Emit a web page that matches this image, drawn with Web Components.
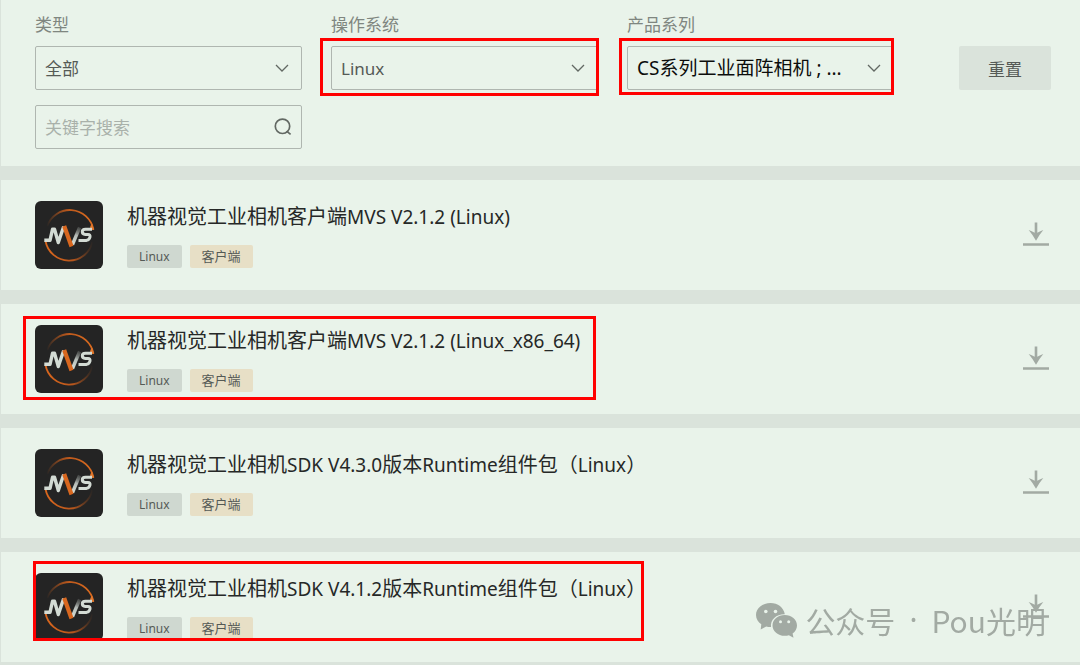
<!DOCTYPE html>
<html lang="zh-CN">
<head>
<meta charset="utf-8">
<meta name="viewport" content="width=device-width, initial-scale=1">
<title>下载中心</title>
<style>
  :root {
    --page: #dae3db;
    --card: #e9f3ea;
    --line: #afb6b0;
    --mark: #ff0000;
  }
  body {
    margin: 0;
    background: var(--page);
    color: #262827;
    font-family: "Noto Sans", "Noto Sans CJK SC", sans-serif;
  }
</style>
</head>
<body>
<download-page></download-page>

<script>
const define = (name, html, setup) => {
  const template = document.createElement('template');
  template.innerHTML = html;
  customElements.define(name, class extends HTMLElement {
    connectedCallback() {
      if (this.shadowRoot) return;
      const root = this.attachShadow({ mode: 'open' });
      root.append(template.content.cloneNode(true));
      if (setup) setup(this, root);
    }
  });
};

/* Drop-down with its label; "strong" gives the larger black value */
define('select-field', `
  <style>
    :host { display: block; position: relative; min-width: 0; }
    label { display: block; font-size: 17px; line-height: 24px; margin-bottom: 9px; color: #7f8680; }
    .box { position: relative; }
    select {
      appearance: none; display: block; box-sizing: border-box; width: 100%; height: 44px;
      padding: 0 40px 0 9px; border: 1px solid var(--line); border-radius: 2px;
      background: transparent; color: #555a56; font: inherit; font-size: 17px;
    }
    :host([strong]) select { color: #0c0d0c; font-size: 19px; }
    svg { position: absolute; right: 13px; top: 15px; pointer-events: none; }
    :host([marked]) .box::after {
      content: ""; position: absolute; inset: -8px -1px -6px -11px;
      border: 3px solid var(--mark); pointer-events: none;
    }
    :host([strong][marked]) .box::after { inset: -8px 0 -5px -8px; }
  </style>
  <label for="field"></label>
  <div class="box">
    <select id="field"><option></option></select>
    <svg width="14" height="14" viewBox="0 0 14 14" fill="none" stroke="#626863" stroke-width="1.3"><path d="M1 4l6 6 6-6"/></svg>
  </div>`, (el, root) => {
  root.querySelector('label').textContent = el.getAttribute('label');
  root.querySelector('option').textContent = el.getAttribute('value');
});

define('search-field', `
  <style>
    :host { display: block; position: relative; min-width: 0; }
    input {
      display: block; box-sizing: border-box; width: 100%; height: 44px; padding: 0 44px 0 9px;
      border: 1px solid var(--line); border-radius: 2px; background: transparent;
      color: #555a56; font: inherit; font-size: 17px;
    }
    input::placeholder { color: #a9b1aa; opacity: 1; }
    button { position: absolute; right: 9px; top: 12px; width: 20px; height: 20px; padding: 0; border: 0; background: none; }
    svg { display: block; }
  </style>
  <input type="search" placeholder="关键字搜索" aria-label="关键字搜索">
  <button type="button" aria-label="搜索">
    <svg width="20" height="20" viewBox="0 0 20 20" fill="none" stroke="#626863" stroke-width="1.7"><circle cx="9.5" cy="9.3" r="7.2"/><path d="M13.6 14.2l4 3.2"/></svg>
  </button>`);

define('filter-bar', `
  <style>
    :host { display: flex; align-items: flex-start; gap: 65px; padding: 13px 29px 17px 34px; background: var(--card); }
    .fields { flex: 1; display: grid; grid-template-columns: repeat(3, minmax(0, 1fr)); gap: 15px 29px; }
    button {
      width: 92px; height: 44px; margin-top: 33px; padding: 0; border: 0; border-radius: 2px;
      background: var(--page); color: #555a56; font: inherit; font-size: 17px;
    }
  </style>
  <div class="fields">
    <select-field label="类型" value="全部"></select-field>
    <select-field label="操作系统" value="Linux" marked></select-field>
    <select-field label="产品系列" value="CS系列工业面阵相机 ; ..." strong marked></select-field>
    <search-field></search-field>
  </div>
  <button type="reset">重置</button>`);

define('mvs-logo', `
  <style>:host { display: block; } svg { display: block; }</style>
  <svg width="68" height="68" viewBox="0 0 68 68" fill="none" role="img" aria-label="MVS">
    <defs>
      <linearGradient id="top" gradientUnits="userSpaceOnUse" x1="12" y1="28" x2="56" y2="22">
        <stop offset="0" stop-color="#c8601e" stop-opacity="0"/><stop offset=".5" stop-color="#b9571c"/><stop offset="1" stop-color="#d96a1f"/>
      </linearGradient>
      <linearGradient id="bottom" gradientUnits="userSpaceOnUse" x1="12" y1="44" x2="58" y2="44">
        <stop offset="0" stop-color="#d9661d"/><stop offset=".55" stop-color="#b9571c"/><stop offset="1" stop-color="#b9571c" stop-opacity="0"/>
      </linearGradient>
      <linearGradient id="fade" gradientUnits="userSpaceOnUse" x1="38" y1="43" x2="45" y2="26">
        <stop offset="0" stop-color="#d3dbd4"/><stop offset=".5" stop-color="#b5bbb6"/><stop offset="1" stop-color="#666a67" stop-opacity=".4"/>
      </linearGradient>
    </defs>
    <rect width="68" height="68" rx="6" fill="#242424"/>
    <path d="M12.2 25A24 24 0 0 1 58.4 28.5" stroke="url(#top)" stroke-width="1.8"/>
    <path d="M54.8 28.8Q54.6 25 57 22.5L59.2 29z" fill="#e0762b"/>
    <path d="M10.5 40A24 24 0 0 0 57.5 41" stroke="url(#bottom)" stroke-width="1.8"/>
    <path d="M9.3 39.3H15L17.5 28.3H19.5L23.3 41.5L28.7 25.5" stroke="#d3dbd4" stroke-width="3.4" stroke-linejoin="round"/>
    <path d="M37.5 43.5L44.6 26.5" stroke="url(#fade)" stroke-width="3.4"/>
    <path d="M29.2 25L36.5 45.5" stroke="#d8671f" stroke-width="4.2"/>
    <path d="M57 28.2H50.5Q47.3 28.2 47.3 30.7T50.3 33.4H53Q55.5 33.4 55 36T51.5 39.4H43.5" stroke="#d3dbd4" stroke-width="3"/>
  </svg>`);

/* Latin runs are set one pixel smaller than the Chinese text round them */
const setMixedText = (target, text) => {
  for (const run of text.trim().match(/[\x20-\x7e]+|[^\x20-\x7e]+/g)) {
    const span = document.createElement('span');
    if (/^[\x20-\x7e]/.test(run)) span.className = 'latin';
    span.textContent = run;
    target.append(span);
  }
};

define('tag-label', `
  <style>
    :host { display: block; padding: 0 12px; border-radius: 2px; background: #cfd8d0; color: #555a56; font-size: 13px; line-height: 22px; }
    :host([kind="client"]) { background: #e7dfc6; }
    .latin { font-size: 12px; }
  </style><div></div>`, (el, root) => setMixedText(root.querySelector('div'), el.getAttribute('text')));

define('download-item', `
  <style>
    :host { display: flex; align-items: flex-start; gap: 24px; padding: 21px 29px 21px 34px; background: var(--card); }
    .main { position: relative; display: flex; gap: 24px; }
    .main::after { content: none; position: absolute; border: 3px solid var(--mark); pointer-events: none; }
    :host([marked]) .main::after { content: ""; inset: -9px -16px -7px -12px; }
    :host([marked="tight"]) .main::after { inset: -12px 2px 0 -2px; }
    h3 { margin: 0 0 12px; font-size: 20px; font-weight: 400; line-height: 32px; }
    .latin { font-size: 19px; }
    .tags { display: flex; gap: 8px; }
    button { align-self: center; margin-left: auto; width: 30px; height: 30px; padding: 0; border: 0; background: none; }
    svg { display: block; }
  </style>
  <div class="main">
    <mvs-logo></mvs-logo>
    <div>
      <h3></h3>
      <div class="tags"><tag-label text="Linux"></tag-label><tag-label kind="client" text="客户端"></tag-label></div>
    </div>
  </div>
  <button type="button" aria-label="下载">
    <svg width="30" height="30" viewBox="0 0 30 30"><path d="M13.7 2.5h2.6v10.2q3-1.3 6-2.7Q18.5 14.5 15 20.8Q11.5 14.5 7.7 10q3 1.4 6 2.7zM2 23.2h26v2.6H2z" fill="#a2aaa3"/></svg>
  </button>`, (el, root) => setMixedText(root.querySelector('h3'), el.getAttribute('heading')));

define('account-watermark', `
  <style>
    :host {
      position: fixed; right: 34px; bottom: 23px; display: flex; align-items: center; gap: 7px;
      color: #a2aaa3; font-family: "Noto Sans CJK SC", sans-serif; font-size: 30px; line-height: 44px; pointer-events: none;
    }
    .text { display: flex; gap: 14px; white-space: nowrap; }
    .dot { font-family: "Noto Sans", sans-serif; }
    svg { display: block; }
  </style>
  <svg width="42" height="36" viewBox="0 0 42 36" aria-hidden="true">
    <path fill="#a2aaa3" d="M14.5 1C6.5 1 0 6.3 0 13c0 3.8 2.1 7.1 5.3 9.3L4.7 27.5l5.5-3q2 .6 4.8.6C14 17.5 20.5 12 28.8 12.2 27.8 5.6 21.8 1 14.5 1z"/>
    <path fill="#a2aaa3" d="M28.7 13C22 13 16.5 17.7 16.5 23.4S22 33.8 28.7 33.8q2.2 0 4.2-.6l4.6 2.5-.9-4.3c2.7-1.9 4.4-4.8 4.4-8C41 17.7 35.5 13 28.7 13z"/>
    <g fill="#e9f3ea"><circle cx="9.8" cy="9.5" r="1.8"/><circle cx="19.5" cy="9.5" r="1.8"/><circle cx="24.5" cy="19.8" r="1.5"/><circle cx="32.7" cy="19.8" r="1.5"/></g>
  </svg>
  <div class="text"><span>公众号</span><span class="dot">·</span><span>Pou光明</span></div>`);

define('download-page', `
  <style>
    :host { display: block; margin-left: 1px; }
    main { display: grid; gap: 14px; }
  </style>
  <main>
    <filter-bar></filter-bar>
    <download-item heading="机器视觉工业相机客户端MVS V2.1.2 (Linux)"></download-item>
    <download-item marked heading="机器视觉工业相机客户端MVS V2.1.2 (Linux_x86_64)"></download-item>
    <download-item heading="机器视觉工业相机SDK V4.3.0版本Runtime组件包（Linux）"></download-item>
    <download-item marked="tight" heading="机器视觉工业相机SDK V4.1.2版本Runtime组件包（Linux）"></download-item>
  </main>
  <account-watermark></account-watermark>`);
</script>
</body>
</html>
